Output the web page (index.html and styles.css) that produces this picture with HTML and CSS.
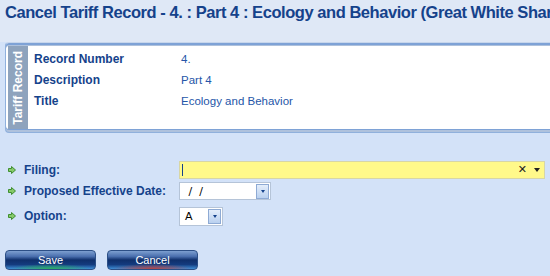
FILE: index.html
```html
<!DOCTYPE html>
<html>
<head>
<meta charset="utf-8">
<link rel="stylesheet" href="styles.css">
</head>
<body>
<div class="page">
  <div class="header">
    <h1 class="title">Cancel Tariff Record - 4. : Part 4 : Ecology and Behavior (Great White Shark)</h1>
  </div>
  <div class="panel">
    <div class="tab"><span class="tab-text">Tariff Record</span></div>
    <div class="panel-body">
      <div class="rec-row"><span class="rec-label">Record Number</span><span class="rec-value">4.</span></div>
      <div class="rec-row"><span class="rec-label">Description</span><span class="rec-value">Part 4</span></div>
      <div class="rec-row"><span class="rec-label">Title</span><span class="rec-value">Ecology and Behavior</span></div>
    </div>
  </div>
  <div class="form">
    <div class="form-row r1">
      <div class="label"><svg class="arrow" width="8" height="8" viewBox="0 0 8 8"><path d="M0.5 2.5 H3.5 V0.5 L7.5 4 L3.5 7.5 V5.5 H0.5 Z" fill="#86c96a" stroke="#3f8f2f" stroke-width="1" stroke-linejoin="round"/></svg>Filing:</div>
      <div class="field filing"><span class="caret"></span><span class="spacer"></span><span class="clear">✕</span><span class="down"></span></div>
    </div>
    <div class="form-row r2">
      <div class="label"><svg class="arrow" width="8" height="8" viewBox="0 0 8 8"><path d="M0.5 2.5 H3.5 V0.5 L7.5 4 L3.5 7.5 V5.5 H0.5 Z" fill="#86c96a" stroke="#3f8f2f" stroke-width="1" stroke-linejoin="round"/></svg>Proposed Effective Date:</div>
      <div class="field date"><span class="ftext"> /  /</span><span class="btn"><span class="btn-arrow"></span></span></div>
    </div>
    <div class="form-row r3">
      <div class="label"><svg class="arrow" width="8" height="8" viewBox="0 0 8 8"><path d="M0.5 2.5 H3.5 V0.5 L7.5 4 L3.5 7.5 V5.5 H0.5 Z" fill="#86c96a" stroke="#3f8f2f" stroke-width="1" stroke-linejoin="round"/></svg>Option:</div>
      <div class="field option"><span class="ftext">A</span><span class="btn"><span class="btn-arrow"></span></span></div>
    </div>
  </div>
  <div class="buttons">
    <button class="gbtn save">Save</button>
    <button class="gbtn cancel">Cancel</button>
  </div>
</div>
</body>
</html>
```
FILE: styles.css
```css
html, body { margin: 0; padding: 0; }
body {
  width: 550px; height: 276px; overflow: hidden;
  background: #d3e2f8;
  font-family: "Liberation Sans", sans-serif;
}
.page { width: 550px; }
.header {
  background: #dfe8f6;
  height: 42px;
  padding: 0 0 0 5px;
  overflow: hidden;
}
.title {
  margin: 0;
  padding-top: 2px;
  font-family: "Liberation Sans", sans-serif;
  font-size: 16.5px;
  letter-spacing: -0.45px;
  font-weight: bold;
  color: #15428b;
  white-space: nowrap;
  line-height: 20px;
}
.panel {
  margin-left: 5px;
  display: flex;
  background: #fff;
  border-top: 1px solid #c7d6ec;
  border-left: 1px solid #8fb0dc;
  border-bottom: 1px solid #8fb0dc;
  box-shadow: inset 0 2px 0 #7ea2d6, inset 0 3px 0 #aec1dc, inset 0 -2px 0 #aec1dc, inset 0 -3px 0 #7ea2d6;
  border-radius: 4px 0 0 4px;
  height: 91px;
  padding: 3px 0 3px 2px;
  box-sizing: border-box;
  background-clip: padding-box;
}
.tab {
  width: 20px;
  background: #8ea3bd;
  display: flex; align-items: center; justify-content: center;
}
.tab-text {
  writing-mode: vertical-rl;
  transform: rotate(180deg);
  color: #fff;
  font-family: "Liberation Sans", sans-serif;
  font-size: 12px;
  font-weight: bold;
  white-space: nowrap;
}
.panel-body {
  flex: 1;
  padding: 2px 0 0 6px;
  background: #fff;
}
.rec-row { display: flex; height: 21px; align-items: center; }
.rec-label {
  width: 147px;
  font-size: 12px; font-weight: bold; color: #15428b;
}
.rec-value {
  font-size: 11.5px; color: #2556a8;
}
.form { padding: 26px 0 0 8px; }
.form-row { display: flex; align-items: center; }
.r1 { height: 21px; }
.r2 { height: 22px; }
.r3 { height: 24px; margin-top: 2px; }
.label {
  width: 171px;
  display: flex; align-items: center;
  white-space: nowrap;
  font-size: 12px; font-weight: bold; color: #15428b;
}
.arrow { margin-right: 8px; flex: none; }
.field {
  display: flex; align-items: center;
  height: 18px; box-sizing: border-box;
  border: 1px solid #b5c4d8;
  background: #fff;
  font-family: "DejaVu Sans", sans-serif; font-size: 11px; color: #000;
}
.filing { width: 366px; background: #fff98a; border-color: #d7d6a6; padding: 0 4px 0 2px; }
.caret { width: 1px; height: 12px; background: #15428b; }
.spacer { flex: 1; }
.clear { font-size: 11px; color: #222; margin-right: 7px; font-weight: bold; }
.down { width: 0; height: 0; border-left: 3.5px solid transparent; border-right: 3.5px solid transparent; border-top: 4px solid #222; }
.date { width: 92px; }
.option { width: 44px; }
.r3 .field { height: 19px; }
.ftext { flex: 1; padding-left: 5px; white-space: pre; }
.btn {
  width: 13px; height: 15px; margin-right: 1px;
  background: linear-gradient(#e4eefb, #b9d0ef);
  border: 1px solid #8eaad4; box-sizing: border-box;
  display: flex; align-items: center; justify-content: center;
}
.btn-arrow { width: 0; height: 0; border-left: 2.5px solid transparent; border-right: 2.5px solid transparent; border-top: 3px solid #15428b; }
.buttons { display: flex; gap: 11px; padding: 22px 0 0 5px; }
.gbtn {
  width: 91px; height: 20px;
  border: 1px solid #2c4f86; border-radius: 4px;
  color: #fff; font-family: "Liberation Sans", sans-serif; font-size: 11px;
  padding: 0; cursor: pointer;
}
.save {
  background:
    radial-gradient(ellipse 40px 5px at 50% 100%, rgba(40,180,80,0.9), rgba(40,180,80,0) 100%),
    linear-gradient(#7d9fd0 0%, #4a6fae 30%, #0f2f6b 50%, #143b7e 75%, #3e8ed6 100%);
}
.cancel {
  background:
    radial-gradient(ellipse 40px 5px at 50% 100%, rgba(200,60,50,0.9), rgba(200,60,50,0) 100%),
    linear-gradient(#7d9fd0 0%, #4a6fae 30%, #0f2f6b 50%, #143b7e 75%, #3e8ed6 100%);
}
```
